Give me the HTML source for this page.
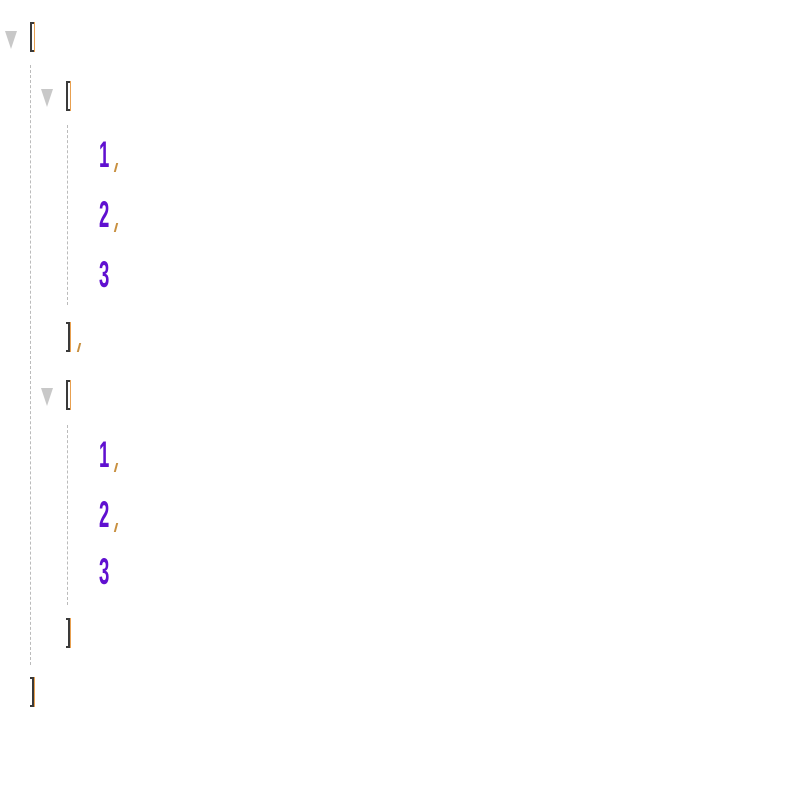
<!DOCTYPE html><html><head><style>
body{margin:0;width:800px;height:800px;background:#fff;position:relative;overflow:hidden;font-family:"Liberation Sans",sans-serif}
.t{position:absolute;width:0;height:0;border-left:6px solid transparent;border-right:6px solid transparent;border-top:18px solid #c8c8c8}
.d{position:absolute;width:0;border-left:1px dashed #bbb}
.b{position:absolute;width:4px;height:30px;border:2.5px solid #3a3a3a;box-sizing:border-box;box-shadow:1px 0 0 #e8a050}
.o{border-right:none}.c{border-left:none}
.n{position:absolute;font-weight:bold;font-size:37px;line-height:37px;color:#6010d0;transform:scaleX(0.5);transform-origin:0 0}
.cm{position:absolute;width:2px;height:9px;background:#c89040;transform:skewX(-15deg)}
</style></head><body>
<div class="t" style="left:5px;top:31px"></div>
<div class="b o" style="left:30px;top:22px"></div>
<div class="d" style="left:30px;top:65px;height:600px"></div>
<div class="t" style="left:41px;top:89px"></div>
<div class="b o" style="left:66px;top:81px"></div>
<div class="d" style="left:67px;top:125px;height:180px"></div>
<div class="n" style="left:99px;top:136px">1</div><div class="cm" style="left:115px;top:163px"></div>
<div class="n" style="left:99px;top:196px">2</div><div class="cm" style="left:115px;top:223px"></div>
<div class="n" style="left:99px;top:256px">3</div>
<div class="b c" style="left:66px;top:322px"></div><div class="cm" style="left:78px;top:343px"></div>
<div class="t" style="left:41px;top:388px"></div>
<div class="b o" style="left:66px;top:380px"></div>
<div class="d" style="left:67px;top:425px;height:180px"></div>
<div class="n" style="left:99px;top:436px">1</div><div class="cm" style="left:115px;top:463px"></div>
<div class="n" style="left:99px;top:496px">2</div><div class="cm" style="left:115px;top:523px"></div>
<div class="n" style="left:99px;top:553px">3</div>
<div class="b c" style="left:66px;top:618px"></div>
<div class="b c" style="left:30px;top:677px"></div>
</body></html>
